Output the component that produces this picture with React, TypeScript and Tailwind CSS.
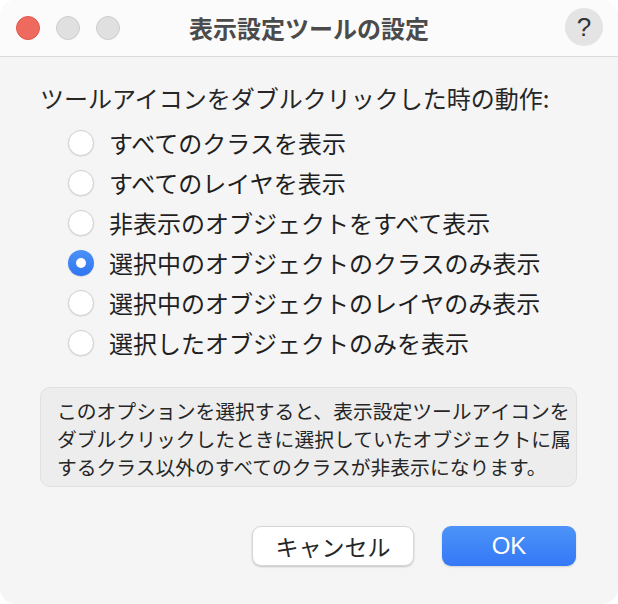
import React, { useState } from 'react';

const options = [
  'すべてのクラスを表示',
  'すべてのレイヤを表示',
  '非表示のオブジェクトをすべて表示',
  '選択中のオブジェクトのクラスのみ表示',
  '選択中のオブジェクトのレイヤのみ表示',
  '選択したオブジェクトのみを表示',
];

const jp = { fontFamily: '"Noto Sans CJK JP", "Noto Sans", sans-serif' };

const Radio: React.FC<{ checked: boolean }> = ({ checked }) =>
  checked ? (
    <span className="flex h-[26px] w-[26px] shrink-0 items-center justify-center rounded-full bg-gradient-to-b from-[#4b91f8] to-[#2f76f2] shadow-[0_0.5px_1px_rgba(0,0,0,0.25)]">
      <span className="h-[10px] w-[10px] rounded-full bg-white" />
    </span>
  ) : (
    <span className="h-[26px] w-[26px] shrink-0 rounded-full border border-[#d2d2d2] bg-white shadow-[0_0.5px_1.5px_rgba(0,0,0,0.12)]" />
  );

export default function App() {
  const [selected, setSelected] = useState(3);

  return (
    <div className="h-[604px] w-[618px] bg-white" style={jp}>
      <div className="flex h-full w-full flex-col overflow-hidden rounded-[16px] bg-[#f5f5f5]">
        {/* title bar */}
        <div className="relative flex h-[57px] shrink-0 items-center justify-center border-b border-[#dadada] bg-[#fbfbfb]">
          <div className="absolute left-[16px] top-[16px] flex gap-[16px]">
            <span className="h-[24px] w-[24px] rounded-full border border-[#e0574b] bg-[#ee6a5f]" />
            <span className="h-[24px] w-[24px] rounded-full border border-[#cdcdcd] bg-[#e0e0e0]" />
            <span className="h-[24px] w-[24px] rounded-full border border-[#cdcdcd] bg-[#e0e0e0]" />
          </div>
          <h1 className="text-[24px] font-bold leading-none text-[#4b4b4b]">表示設定ツールの設定</h1>
          <button
            className="absolute right-[15px] top-[8px] flex h-[38px] w-[38px] items-center justify-center rounded-full bg-[#e4e4e4] text-[26px] font-medium leading-none text-[#333]"
            style={{ fontFamily: '"Liberation Sans", Arial, sans-serif' }}
          >
            ?
          </button>
        </div>

        {/* body */}
        <div className="flex flex-col px-[40px]">
          <p className="mt-[26px] text-[24px] leading-[30px] text-[#262626]">ツールアイコンをダブルクリックした時の動作:</p>

          <ul className="mt-[10px] flex flex-col pl-[28px]">
            {options.map((label, i) => (
              <li
                key={label}
                onClick={() => setSelected(i)}
                className="flex h-[40px] cursor-default items-center gap-[15px] text-[24px] text-[#1f1f1f]"
              >
                <Radio checked={selected === i} />
                <span className="leading-none">{label}</span>
              </li>
            ))}
          </ul>

          <div className="mt-[24px] w-[537px] rounded-[10px] border border-[#e1e1e1] bg-[#ededed] pb-[5px] pl-[16px] pt-[9px] text-[19.8px] leading-[28px] text-[#262626]">
            <p className="whitespace-nowrap">このオプションを選択すると、表示設定ツールアイコンを</p>
            <p className="whitespace-nowrap">ダブルクリックしたときに選択していたオブジェクトに属</p>
            <p className="whitespace-nowrap">するクラス以外のすべてのクラスが非表示になります。</p>
          </div>

          <div className="mt-[39px] flex justify-end gap-[28px] pr-[2px]">
            <button className="flex h-[40px] w-[162px] items-center justify-center rounded-[9px] border border-[#d6d6d6] bg-white text-[23px] text-[#262626] shadow-[0_1px_2px_rgba(0,0,0,0.2)]">
              キャンセル
            </button>
            <button
              className="flex h-[40px] w-[134px] items-center justify-center rounded-[9px] bg-gradient-to-b from-[#4d93f8] to-[#3478f6] text-[24px] font-medium text-white shadow-[0_1px_2px_rgba(0,0,0,0.15)]"
              style={{ fontFamily: '"Liberation Sans", Arial, sans-serif' }}
            >
              OK
            </button>
          </div>
        </div>
      </div>
    </div>
  );
}
